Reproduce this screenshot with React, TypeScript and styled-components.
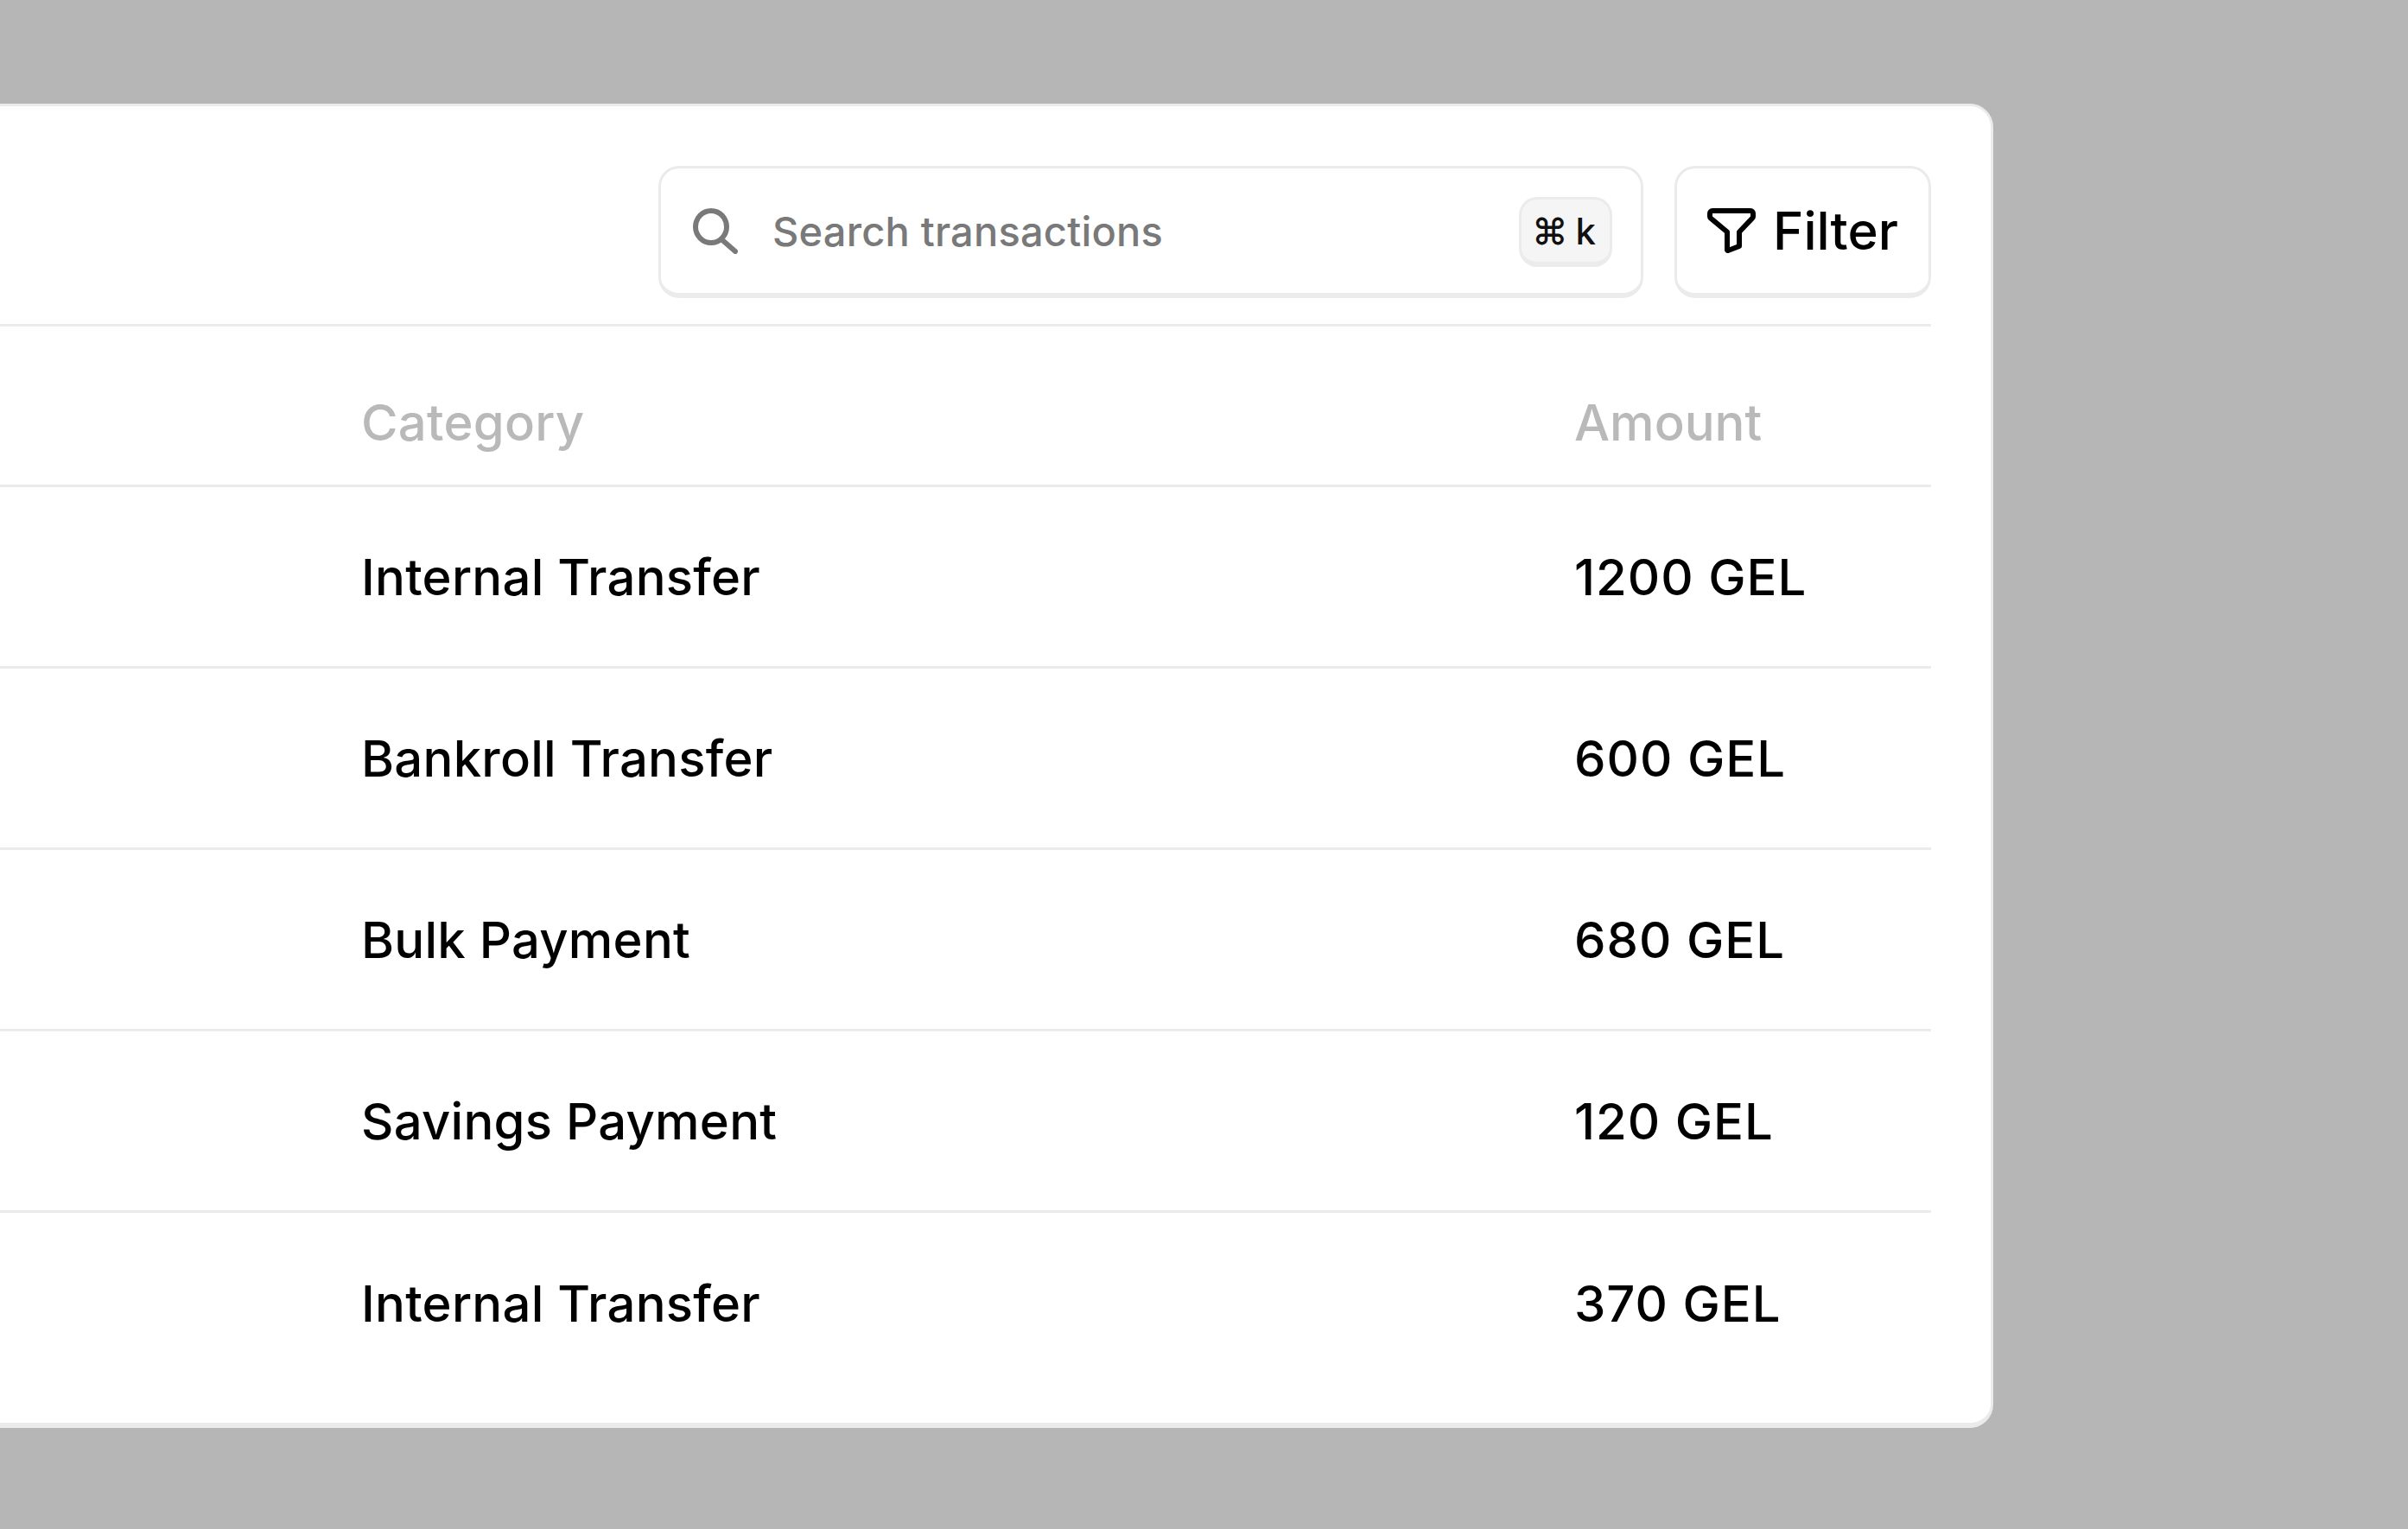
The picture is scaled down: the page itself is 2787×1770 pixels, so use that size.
import React from 'react'
import styled, { createGlobalStyle } from 'styled-components'

const GlobalStyle = createGlobalStyle`
  html, body {
    margin: 0;
    padding: 0;
    background: #b6b6b6;
  }
  body {
    font-family: Inter, "Liberation Sans", sans-serif;
    font-weight: 500;
    overflow: hidden;
  }
`

const Page = styled.div`
  width: 2787px;
  height: 1770px;
  padding-top: 120px;
  box-sizing: border-box;
  background: #b6b6b6;
`

const Card = styled.section`
  width: 2307px;
  height: 1533px;
  box-sizing: border-box;
  padding: 69px 69px 0 0;
  background: #fff;
  border: 3px solid #ebebeb;
  border-left: none;
  border-bottom-width: 6px;
  border-radius: 0 27px 27px 0;
`

const Toolbar = styled.div`
  display: flex;
  justify-content: flex-end;
  gap: 36px;
  padding-bottom: 30px;
  border-bottom: 3px solid #ebebeb;
`

const Search = styled.div`
  width: 1140px;
  height: 153px;
  box-sizing: border-box;
  display: flex;
  align-items: center;
  padding: 0 33px 0 37px;
  background: #fff;
  border: 3px solid #ebebeb;
  border-bottom-width: 6px;
  border-radius: 24px;
`

const Placeholder = styled.span`
  flex: 1;
  margin-left: 40px;
  font-size: 47px;
  letter-spacing: 0.2px;
  color: #797979;
`

const Kbd = styled.kbd`
  width: 108px;
  height: 81px;
  margin-top: 3px;
  box-sizing: border-box;
  display: flex;
  align-items: center;
  justify-content: center;
  gap: 9px;
  padding-right: 4px;
  background: #f5f5f5;
  border: 3px solid #ebebeb;
  border-bottom-width: 6px;
  border-radius: 21px;
  font-family: Inter, "DejaVu Sans", sans-serif;
  font-size: 42px;
  color: #111;
`

const FilterButton = styled.button`
  width: 297px;
  height: 153px;
  box-sizing: border-box;
  display: flex;
  align-items: center;
  justify-content: center;
  gap: 20px;
  padding: 0;
  background: #fff;
  border: 3px solid #ebebeb;
  border-bottom-width: 6px;
  border-radius: 24px;
  font-family: inherit;
  font-weight: 500;
  font-size: 60px;
  color: #000;
`

const Row = styled.div<{ $last?: boolean }>`
  display: grid;
  grid-template-columns: 1404px 1fr;
  align-items: center;
  height: 210px;
  box-sizing: border-box;
  padding-left: 418px;
  font-size: 58px;
  color: #000;
  border-bottom: ${(p) => (p.$last ? 'none' : '3px solid #ebebeb')};
`

const HeaderRow = styled(Row)`
  height: 186px;
  padding-top: 38px;
  color: #b9b9b9;
`

const Category = styled.span`
  letter-spacing: 0.25px;
`

const Amount = styled.span`
  letter-spacing: 1px;
`

const SearchIcon = () => (
  <svg width="52" height="53" viewBox="0 0 52 53" fill="none" stroke="#797979" strokeWidth="6" strokeLinecap="round">
    <ellipse cx="21" cy="21.5" rx="18" ry="18.5" />
    <path d="M33 36L49 50" />
  </svg>
)

const FunnelIcon = () => (
  <svg width="56" height="52" viewBox="0 0 56 52" fill="none" stroke="#000" strokeWidth="6" strokeLinejoin="round">
    <path d="M6 3H50a3 3 0 0 1 3 3v3.5a3 3 0 0 1-.8 2L37 27.5V44L24 49a.8.8 0 0 1-1-.8V27.5L3.8 11.5a3 3 0 0 1-.8-2V6a3 3 0 0 1 3-3z" />
  </svg>
)

const rows = [
  { category: 'Internal Transfer', amount: '1200 GEL' },
  { category: 'Bankroll Transfer', amount: '600 GEL' },
  { category: 'Bulk Payment', amount: '680 GEL' },
  { category: 'Savings Payment', amount: '120 GEL' },
  { category: 'Internal Transfer', amount: '370 GEL' },
]

export default function App() {
  return (
    <Page>
      <GlobalStyle />
      <Card>
        <Toolbar>
          <Search>
            <SearchIcon />
            <Placeholder>Search transactions</Placeholder>
            <Kbd>
              <span>⌘</span>
              <span>k</span>
            </Kbd>
          </Search>
          <FilterButton>
            <FunnelIcon />
            Filter
          </FilterButton>
        </Toolbar>
        <HeaderRow>
          <Category>Category</Category>
          <span>Amount</span>
        </HeaderRow>
        {rows.map((row, i) => (
          <Row key={i} $last={i === rows.length - 1}>
            <Category>{row.category}</Category>
            <Amount>{row.amount}</Amount>
          </Row>
        ))}
      </Card>
    </Page>
  )
}
